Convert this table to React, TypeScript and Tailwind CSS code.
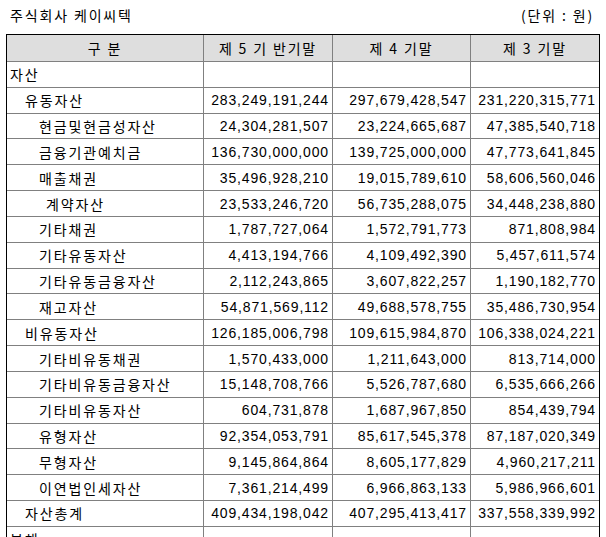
import React from "react";

type Row = { lv: number; label: string; v: [string, string, string] };

const rows: Row[] = [
  { lv: 0, label: "자산", v: ["", "", ""] },
  { lv: 1, label: "유동자산", v: ["283,249,191,244", "297,679,428,547", "231,220,315,771"] },
  { lv: 2, label: "현금및현금성자산", v: ["24,304,281,507", "23,224,665,687", "47,385,540,718"] },
  { lv: 2, label: "금융기관예치금", v: ["136,730,000,000", "139,725,000,000", "47,773,641,845"] },
  { lv: 2, label: "매출채권", v: ["35,496,928,210", "19,015,789,610", "58,606,560,046"] },
  { lv: 3, label: "계약자산", v: ["23,533,246,720", "56,735,288,075", "34,448,238,880"] },
  { lv: 2, label: "기타채권", v: ["1,787,727,064", "1,572,791,773", "871,808,984"] },
  { lv: 2, label: "기타유동자산", v: ["4,413,194,766", "4,109,492,390", "5,457,611,574"] },
  { lv: 2, label: "기타유동금융자산", v: ["2,112,243,865", "3,607,822,257", "1,190,182,770"] },
  { lv: 2, label: "재고자산", v: ["54,871,569,112", "49,688,578,755", "35,486,730,954"] },
  { lv: 1, label: "비유동자산", v: ["126,185,006,798", "109,615,984,870", "106,338,024,221"] },
  { lv: 2, label: "기타비유동채권", v: ["1,570,433,000", "1,211,643,000", "813,714,000"] },
  { lv: 2, label: "기타비유동금융자산", v: ["15,148,708,766", "5,526,787,680", "6,535,666,266"] },
  { lv: 2, label: "기타비유동자산", v: ["604,731,878", "1,687,967,850", "854,439,794"] },
  { lv: 2, label: "유형자산", v: ["92,354,053,791", "85,617,545,378", "87,187,020,349"] },
  { lv: 2, label: "무형자산", v: ["9,145,864,864", "8,605,177,829", "4,960,217,211"] },
  { lv: 2, label: "이연법인세자산", v: ["7,361,214,499", "6,966,863,133", "5,986,966,601"] },
  { lv: 1, label: "자산총계", v: ["409,434,198,042", "407,295,413,417", "337,558,339,992"] },
  { lv: 0, label: "부채", v: ["", "", ""] },
];

const ko = "font-['Noto_Sans_CJK_KR',sans-serif] text-[14px] tracking-[1.85px] leading-[18px]";
const num = "font-['Liberation_Sans',sans-serif] text-[14px] tracking-[0.85px] leading-[18px]";

const indent = ["pl-[3px]", "pl-[18px]", "pl-[32px]", "pl-[39px]"];

export default function App() {
  return (
    <div className="w-[606px] h-[537px] overflow-hidden bg-white text-black">
      <div className="flex justify-between items-start h-[34px] pt-[6px] pl-[10px] pr-[12px]">
        <span className={ko}>주식회사 케이씨텍</span>
        <span className={ko}>(단위 : 원)</span>
      </div>
      <div className="ml-[6px] w-[594px] border-t border-l border-r border-black">
        <div className="flex h-[27px] bg-[#dedede] border-b border-[#808080]">
          <div className={`w-[197px] border-r border-[#808080] flex items-center justify-center ${ko}`}>구 분</div>
          <div className={`w-[129px] border-r border-[#808080] flex items-center justify-center ${ko}`}>제 5 기 반기말</div>
          <div className={`w-[138px] border-r border-[#808080] flex items-center justify-center ${ko}`}>제 4 기말</div>
          <div className={`w-[128px] flex items-center justify-center ${ko}`}>제 3 기말</div>
        </div>
        {rows.map((r, i) => (
          <div key={i} className="flex h-[25.83px] border-b border-[#808080]">
            <div className={`w-[197px] border-r border-[#808080] flex items-center ${indent[r.lv]} ${ko}`}>{r.label}</div>
            <div className={`w-[129px] border-r border-[#808080] flex items-center justify-end pr-[3px] ${num}`}>{r.v[0]}</div>
            <div className={`w-[138px] border-r border-[#808080] flex items-center justify-end pr-[3px] ${num}`}>{r.v[1]}</div>
            <div className={`w-[128px] flex items-center justify-end pr-[3px] ${num}`}>{r.v[2]}</div>
          </div>
        ))}
      </div>
    </div>
  );
}
